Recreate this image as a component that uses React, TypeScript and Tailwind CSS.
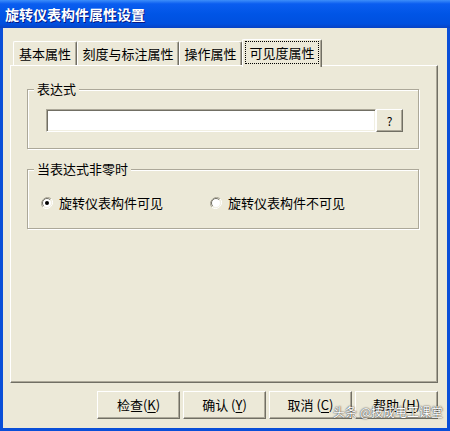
import { ReactNode } from "react";

const font = { fontFamily: '"Noto Sans CJK SC", "Noto Sans", sans-serif' };

function Tab({ label, width, active }: { label: string; width: string; active?: boolean }) {
    if (active) {
        return (
            <div
                className={`${width} relative z-10 -mb-[2px] flex h-[28px] flex-col rounded-t-[2px] border-l border-t border-r border-l-white border-t-white border-r-[#716F64] bg-[#ECE9D8] px-[2px] pt-[1px] pb-[3px] shadow-[inset_-1px_0_0_#ACA899]`}
            >
                <div className="flex flex-1 items-center justify-center border border-dotted border-black text-[13px] leading-[16px]">
                    {label}
                </div>
            </div>
        );
    }
    return (
        <div
            className={`${width} flex h-[24px] items-center justify-center rounded-t-[2px] border-l border-t border-r border-l-white border-t-white border-r-[#716F64] text-[13px] leading-[16px] shadow-[inset_-1px_0_0_#ACA899]`}
        >
            {label}
        </div>
    );
}

function Group({ title, children, className }: { title: string; children: ReactNode; className: string }) {
    return (
        <div
            className={`${className} ml-[16px] flex h-[60px] w-[392px] flex-col border border-[#ACA899] shadow-[inset_1px_1px_0_#fff,1px_1px_0_#fff]`}
        >
            <div className="-mt-[9px] ml-[6px] h-[16px] w-fit bg-[#ECE9D8] px-[3px] text-[13px] leading-[16px]">
                {title}
            </div>
            {children}
        </div>
    );
}

function Radio({ label, checked, className }: { label: string; checked?: boolean; className?: string }) {
    return (
        <div className={`${className ?? ""} flex items-center gap-[6px]`}>
            <svg width="12" height="12" viewBox="0 0 12 12">
                <path d="M10.2 1.8A6 6 0 0 0 1.8 10.2" fill="none" stroke="#ACA899" strokeWidth="1" />
                <path d="M1.8 10.2A6 6 0 0 0 10.2 1.8" fill="none" stroke="#fff" strokeWidth="1" />
                <circle cx="6" cy="6" r="4.5" fill="#fff" />
                <path d="M9.2 2.8A4.5 4.5 0 0 0 2.8 9.2" fill="none" stroke="#716F64" strokeWidth="1" />
                <path d="M2.8 9.2A4.5 4.5 0 0 0 9.2 2.8" fill="none" stroke="#F1EFE2" strokeWidth="1" />
                {checked && <circle cx="6" cy="6" r="2" fill="#000" />}
            </svg>
            <span className="text-[13px] leading-[16px]">{label}</span>
        </div>
    );
}

function Button({ text, hotkey, spaced }: { text: string; hotkey: string; spaced?: boolean }) {
    return (
        <div className="flex h-[28px] w-[83px] items-center justify-center border border-t-white border-l-white border-r-[#716F64] border-b-[#716F64] text-[13px] leading-[16px] shadow-[inset_-1px_-1px_0_#ACA899]">
            {text}
            {spaced ? " " : ""}(<span className="underline underline-offset-2">{hotkey}</span>)
        </div>
    );
}

export default function App() {
    return (
        <div
            className="relative flex h-[431px] w-[450px] flex-col bg-[#0A4FD8] text-black"
            style={font}
        >
            <div className="flex h-[28px] shrink-0 items-center bg-[linear-gradient(to_bottom,#3D8EFA_0%,#0A5DF0_14%,#0055E6_50%,#0050DF_85%,#0842C4_100%)] pl-[5px]">
                <span className="text-[14px] font-bold leading-[16px] text-white [text-shadow:1px_1px_0_#0A1883]">
                    旋转仪表构件属性设置
                </span>
            </div>

            <div className="mx-[3px] mb-[3px] flex flex-1 flex-col bg-[#ECE9D8] pt-[11px]">
                <div className="ml-[10px] flex items-end">
                    <Tab label="基本属性" width="w-[64px]" />
                    <Tab label="刻度与标注属性" width="w-[102px]" />
                    <Tab label="操作属性" width="w-[63px]" />
                    <Tab label="可见度属性" width="w-[80px]" active />
                </div>

                <div className="ml-[7px] flex h-[318px] w-[428px] flex-col border border-t-white border-l-white border-r-[#716F64] border-b-[#716F64] shadow-[inset_-1px_-1px_0_#ACA899]">
                    <Group title="表达式" className="mt-[23px]">
                        <div className="mt-[12px] ml-[18px] flex">
                            <div className="h-[23px] w-[330px] border border-t-[#ACA899] border-l-[#ACA899] border-r-white border-b-white bg-white shadow-[inset_1px_1px_0_#716F64,inset_-1px_-1px_0_#F1EFE2]" />
                            <div className="flex h-[23px] w-[27px] items-center justify-center border border-t-white border-l-white border-r-[#716F64] border-b-[#716F64] text-[12px] leading-[14px] shadow-[inset_-1px_-1px_0_#ACA899]">
                                ?
                            </div>
                        </div>
                    </Group>

                    <Group title="当表达式非零时" className="mt-[20px]">
                        <div className="mt-[18px] ml-[13px] flex">
                            <Radio label="旋转仪表构件可见" checked className="w-[169px]" />
                            <Radio label="旋转仪表构件不可见" />
                        </div>
                    </Group>
                </div>

                <div className="mt-[8px] ml-[7px] flex w-[428px] justify-end gap-[3px]">
                    <Button text="检查" hotkey="K" />
                    <Button text="确认" hotkey="Y" spaced />
                    <Button text="取消" hotkey="C" spaced />
                    <Button text="帮助" hotkey="H" spaced />
                </div>
            </div>

            <div className="absolute left-[333px] top-[404px] text-[12px] leading-[16px] text-white [text-shadow:0_0_1px_#333,0_0_2px_#555]">
                头条 @技成电工课堂
            </div>
        </div>
    );
}
